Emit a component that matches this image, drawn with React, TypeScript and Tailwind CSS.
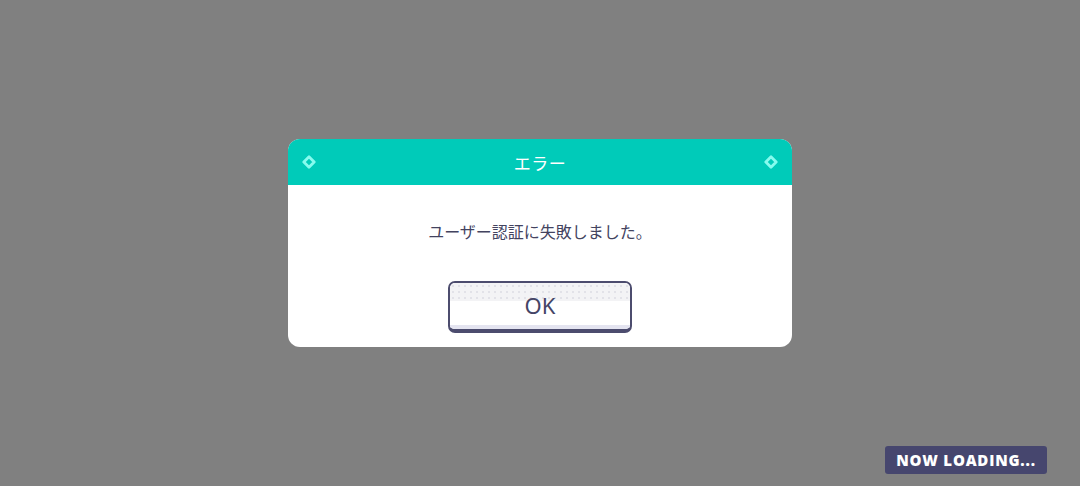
const Diamond = () => (
  <svg width="14" height="14" viewBox="0 0 14 14" className="shrink-0">
    <path d="M7 1.8 L12.2 7 L7 12.2 L1.8 7 Z" fill="none" stroke="#86fbee" strokeWidth="2.8" strokeLinejoin="round" />
  </svg>
);

const App = () => {
  return (
    <div
      className="relative w-[1080px] h-[486px] bg-[#808080] overflow-hidden"
      style={{ fontFamily: '"Noto Sans CJK JP", "Noto Sans", sans-serif' }}
    >
      <div className="flex h-full items-center justify-center pb-[1px]">
        {/* dialog */}
        <div className="w-[504px] h-[208px] rounded-[12px] bg-white overflow-hidden flex flex-col">
          <div className="h-[46px] bg-[#00cbb9] flex items-center justify-between px-[14px]">
            <Diamond />
            <span className="text-[17px] text-white leading-none tracking-[0.5px] mt-[2px]">エラー</span>
            <Diamond />
          </div>
          <div className="flex-1 flex flex-col items-center">
            <p className="mt-[38px] text-[16px] leading-none text-[#43435f]">ユーザー認証に失敗しました。</p>
            <button className="relative mt-[42px] w-[184px] h-[52px] rounded-[7px] border-2 border-b-[4px] border-[#4c4c6e] bg-white overflow-hidden flex flex-col">
              <div
                className="h-[18px] w-full bg-[#f3f3f5]"
                style={{
                  backgroundImage: 'radial-gradient(circle, #e2e2e8 1px, transparent 1.4px)',
                  backgroundSize: '6px 6px',
                }}
              />
              <div className="flex-1 w-full border-b-[4px] border-[#e4e4f0]" />
              <span className="absolute inset-0 flex items-center justify-center text-[22px] leading-none text-[#454566] pb-[2px]" style={{ fontFamily: '"Noto Sans", sans-serif' }}>
                OK
              </span>
            </button>
          </div>
        </div>
      </div>
      <div className="absolute left-[885px] top-[446px] w-[162px] h-[28px] rounded-[3px] bg-[#46466e] flex items-center justify-center">
        <span className="text-white text-[15px] font-extrabold tracking-[0.8px] leading-none" style={{ fontFamily: '"Open Sans", "DejaVu Sans", sans-serif' }}>
          NOW LOADING...
        </span>
      </div>
    </div>
  );
};

export default App;
